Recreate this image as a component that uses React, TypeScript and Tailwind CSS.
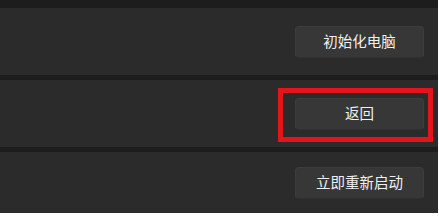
import React from 'react';

const ROWS = [
  { label: '初始化电脑', h: 'h-[67px]' },
  { label: '返回', h: 'h-[67px]', marked: true },
  { label: '立即重新启动', h: 'h-[61px]' },
];

function ActionButton({ label }: { label: string }) {
  return (
    <button className="w-[129px] h-[32px] rounded-[4px] bg-[#373737] border border-[#3d3d3d] border-b-[#303030] text-[14.5px] text-[#f0f0f0] leading-none">
      {label}
    </button>
  );
}

export default function App() {
  return (
    <div
      className="w-[439px] h-[216px] bg-white overflow-hidden"
      style={{ fontFamily: '"Microsoft YaHei", "Noto Sans CJK SC", sans-serif' }}
    >
      <div className="w-[438px] h-[213px] bg-[#1d1d1d] flex flex-col gap-[5px] pt-[8px]">
        {ROWS.map(row => (
          <div
            key={row.label}
            className={`relative ${row.h} bg-[#2b2b2b] flex items-center justify-end pr-[14px] shrink-0`}
          >
            <ActionButton label={row.label} />
            {row.marked && (
              <div className="absolute left-[278px] top-[8px] w-[155px] h-[54px] border-[5px] border-[#e3141c]" />
            )}
          </div>
        ))}
      </div>
    </div>
  );
}
